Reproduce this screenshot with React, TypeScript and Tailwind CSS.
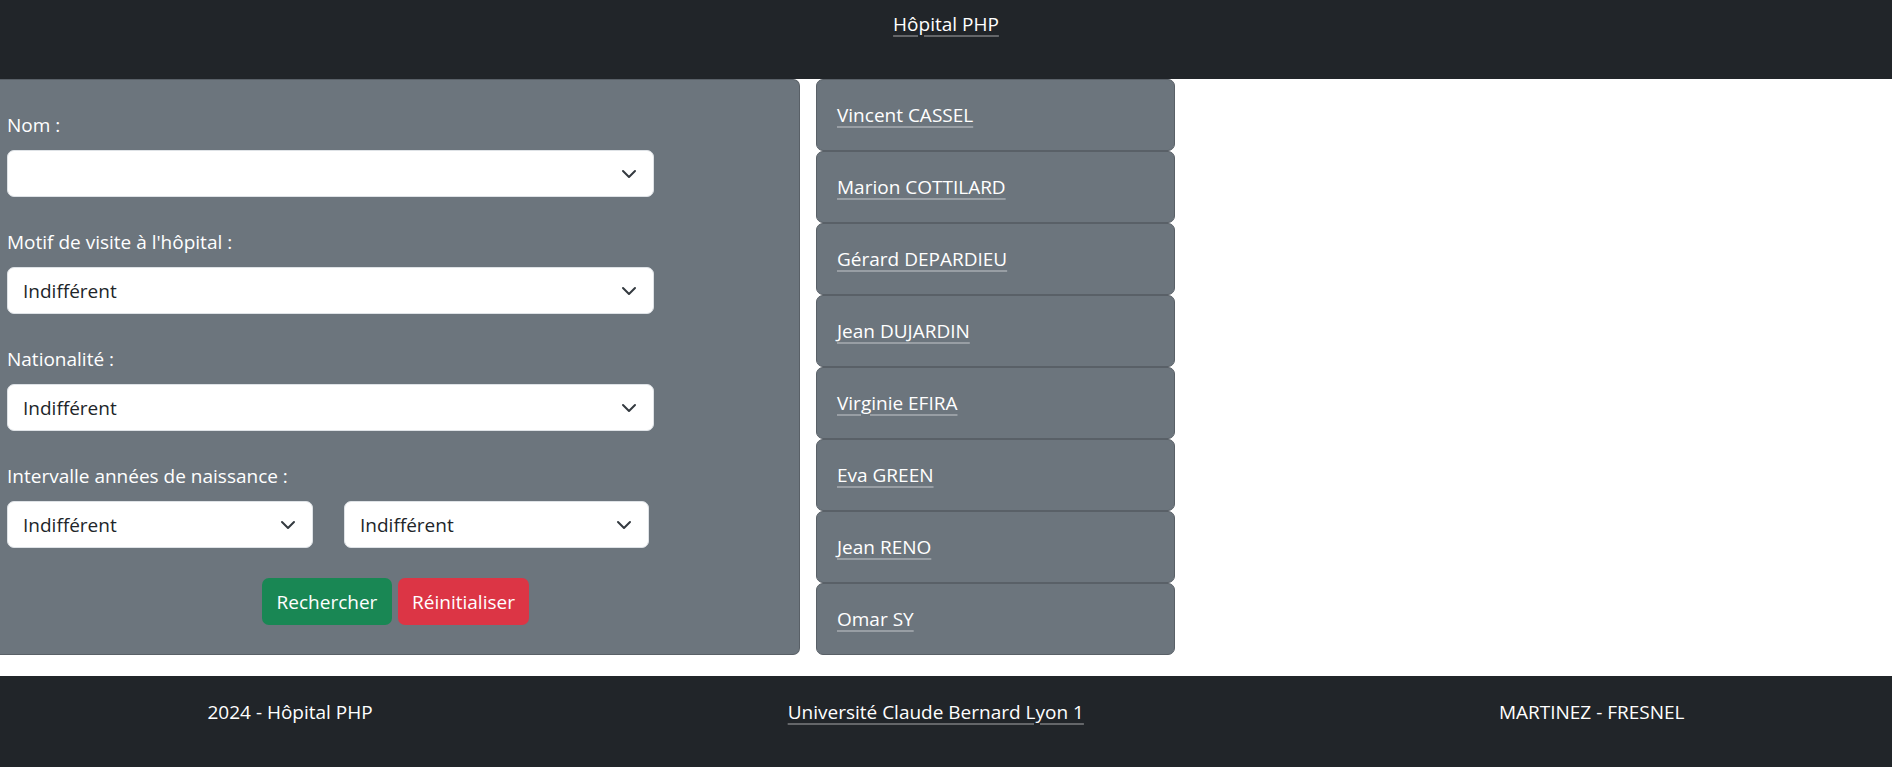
import React from "react";

const Chevron = () => (
  <svg viewBox="0 0 16 16" className="w-4 h-4 shrink-0" fill="none">
    <path d="m2 5 6 6 6-6" stroke="#343a40" strokeWidth="2" strokeLinecap="round" strokeLinejoin="round" />
  </svg>
);

const Select = ({ value, className }: { value: string; className: string }) => (
  <div
    className={`h-[47px] bg-white border border-[#dee2e6] rounded-[7px] flex items-center justify-between pl-[15px] pr-[16px] text-[#212529] ${className}`}
  >
    <span>{value}</span>
    <Chevron />
  </div>
);

const Label = ({ children }: { children: React.ReactNode }) => (
  <div className="mb-[10px] text-white">{children}</div>
);

const names = [
  "Vincent CASSEL",
  "Marion COTTILARD",
  "Gérard DEPARDIEU",
  "Jean DUJARDIN",
  "Virginie EFIRA",
  "Eva GREEN",
  "Jean RENO",
  "Omar SY",
];

export default function App() {
  return (
    <div className="min-h-screen bg-white font-['Open_Sans',sans-serif] text-[19px] leading-[30px]">
      <header className="h-[79px] bg-[#212529] flex justify-center pt-[9px]">
        <a className="h-[30px] text-white underline decoration-white/30 decoration-2 underline-offset-4">
          Hôpital PHP
        </a>
      </header>

      <main className="flex gap-[16px]">
        <div className="w-[800px] bg-[#6c757d] border border-l-0 border-[#596067] rounded-r-[7px] pl-[7px] pt-[30px] pb-[29px]">
          <Label>Nom :</Label>
          <Select value="" className="w-[647px] mb-[30px]" />
          <Label>Motif de visite à l'hôpital :</Label>
          <Select value="Indifférent" className="w-[647px] mb-[30px]" />
          <Label>Nationalité :</Label>
          <Select value="Indifférent" className="w-[647px] mb-[30px]" />
          <Label>Intervalle années de naissance :</Label>
          <div className="flex gap-[31px] mb-[30px]">
            <Select value="Indifférent" className="w-[306px]" />
            <Select value="Indifférent" className="w-[305px]" />
          </div>
          <div className="flex gap-[6px] ml-[255px]">
            <button className="w-[130px] h-[47px] rounded-[7px] bg-[#198754] text-white">Rechercher</button>
            <button className="w-[131px] h-[47px] rounded-[7px] bg-[#dc3545] text-white">Réinitialiser</button>
          </div>
        </div>

        <div className="w-[359px] flex flex-col">
          {names.map((n) => (
            <div
              key={n}
              className="h-[72px] bg-[#6c757d] border border-[#596067] rounded-[7px] px-[20px] flex items-center"
            >
              <a className="text-white underline decoration-white/30 decoration-2 underline-offset-4">{n}</a>
            </div>
          ))}
        </div>
      </main>

      <footer className="mt-[21px] h-[91px] bg-[#212529] flex justify-around pt-[21px] text-white">
        <span className="h-[30px]">2024 - Hôpital PHP</span>
        <a className="h-[30px] underline decoration-white/30 decoration-2 underline-offset-4">
          Université Claude Bernard Lyon 1
        </a>
        <span className="h-[30px]">MARTINEZ - FRESNEL</span>
      </footer>
    </div>
  );
}
